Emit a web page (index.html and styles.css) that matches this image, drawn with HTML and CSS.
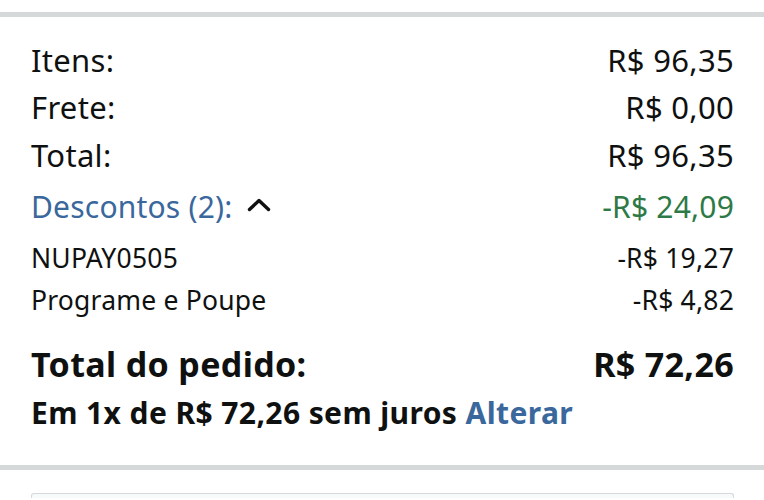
FILE: index.html
```html
<!DOCTYPE html>
<html lang="pt-BR">
<head>
<meta charset="utf-8">
<title>Resumo do pedido</title>
<link rel="stylesheet" href="styles.css">
</head>
<body>
<div class="divider top"></div>
<section class="summary">
  <div class="row main"><span>Itens:</span><span>R$ 96,35</span></div>
  <div class="row main"><span>Frete:</span><span>R$ 0,00</span></div>
  <div class="row main"><span>Total:</span><span>R$ 96,35</span></div>
  <div class="row disc">
    <span class="link toggle">Descontos (2):<svg class="chev" viewBox="0 0 24 14" width="24" height="14" aria-hidden="true"><polyline points="2.5,11.5 12,2.5 21.5,11.5" fill="none" stroke="#111" stroke-width="3.4" stroke-linecap="round" stroke-linejoin="round"/></svg></span>
    <span class="green">-R$ 24,09</span>
  </div>
  <div class="row sub first"><span>NUPAY0505</span><span>-R$ 19,27</span></div>
  <div class="row sub"><span>Programe e Poupe</span><span>-R$ 4,82</span></div>
  <div class="row grand"><span>Total do pedido:</span><span>R$ 72,26</span></div>
  <div class="installments">Em 1x de R$ 72,26 sem juros <a class="link" href="#">Alterar</a></div>
</section>
<div class="divider bottom"></div>
<div class="box"></div>
</body>
</html>
```
FILE: styles.css
```css
html, body {
  margin: 0;
  padding: 0;
  background: #ffffff;
}
body {
  font-family: "Noto Sans", "Open Sans", sans-serif;
  color: #0f1111;
  width: 764px;
  height: 500px;
  overflow: hidden;
}
.divider {
  height: 5px;
  background: #d5d9d9;
}
.divider.top {
  margin-top: 12px;
}
.summary {
  padding: 19.6px 30px 0 31px;
}
.row {
  display: flex;
  justify-content: space-between;
  align-items: baseline;
  white-space: nowrap;
}
.row.main {
  font-size: 31px;
  line-height: 47.5px;
  letter-spacing: 0.3px;
}
.row.disc {
  font-size: 30px;
  line-height: 56px;
  letter-spacing: 0.2px;
}
.row.sub {
  font-size: 26.5px;
  line-height: 42px;
  letter-spacing: 0.2px;
}
.row.sub.first {
  margin-top: 1.5px;
}
.row.grand {
  font-size: 34px;
  font-weight: 700;
  line-height: 48px;
  margin-top: 19px;
  letter-spacing: 0.35px;
}
.installments {
  font-size: 30px;
  font-weight: 700;
  line-height: 40px;
  margin-top: 5.5px;
  letter-spacing: 0.4px;
  white-space: nowrap;
}
.link {
  color: #3a679c;
  text-decoration: none;
}
.toggle {
  display: inline-flex;
  align-items: center;
}
.chev {
  margin-left: 15px;
  margin-top: -4px;
}
.green {
  color: #2e7a46;
}
.divider.bottom {
  margin-top: 32px;
}
.box {
  margin: 23px 30px 0 31px;
  height: 4px;
  border: 1px solid #d5d9d9;
  border-bottom: 0;
  border-radius: 3px 3px 0 0;
  background: #f7fafa;
}
```
